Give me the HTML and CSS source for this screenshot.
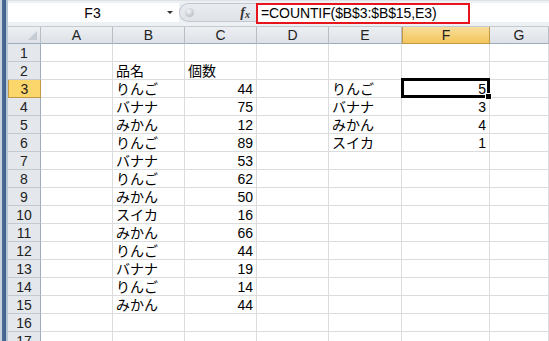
FILE: index.html
```html
<!DOCTYPE html>
<html lang="ja">
<head>
  <meta charset="UTF-8">
  <title>COUNTIF</title>
  <link rel="stylesheet" href="styles.css">
</head>
<body>
  <div class="window">
    <div class="side-bar"></div>
    <div class="main">
      <div class="formula-bar">
        <div class="name-box">
          <span class="name">F3</span>
          <span class="drop"></span>
        </div>
        <div class="splitter">
          <span class="knob"></span>
          <span class="fx">f<sub>x</sub></span>
        </div>
        <div class="formula">
          <span class="formula-text">=COUNTIF($B$3:$B$15,E3)</span>
        </div>
      </div>

      <div class="sheet" id="sheet"></div>
    </div>
  </div>

  <script>
    var cols = ['A', 'B', 'C', 'D', 'E', 'F', 'G'];
    var data = {
      2: { B: '品名', C: '個数' },
      3: { B: 'りんご', C: 44, E: 'りんご', F: 5 },
      4: { B: 'バナナ', C: 75, E: 'バナナ', F: 3 },
      5: { B: 'みかん', C: 12, E: 'みかん', F: 4 },
      6: { B: 'りんご', C: 89, E: 'スイカ', F: 1 },
      7: { B: 'バナナ', C: 53 },
      8: { B: 'りんご', C: 62 },
      9: { B: 'みかん', C: 50 },
      10: { B: 'スイカ', C: 16 },
      11: { B: 'みかん', C: 66 },
      12: { B: 'りんご', C: 44 },
      13: { B: 'バナナ', C: 19 },
      14: { B: 'りんご', C: 14 },
      15: { B: 'みかん', C: 44 }
    };
    var sheet = document.getElementById('sheet');

    function cell(cls, text) {
      var div = document.createElement('div');
      div.className = cls;
      if (text !== undefined) div.textContent = text;
      sheet.appendChild(div);
      return div;
    }

    // header row
    cell('corner');
    cols.forEach(function(c) {
      cell('col-head' + (c === 'F' ? ' active' : ''), c);
    });

    for (var r = 1; r <= 17; r++) {
      cell('row-head' + (r === 3 ? ' active' : ''), r);
      cols.forEach(function(c) {
        var v = data[r] ? data[r][c] : undefined;
        var cls = 'cell';
        if (typeof v === 'number') cls += ' num';
        if (r === 3 && c === 'F') cls += ' selected';
        var el = cell(cls, v);
        if (r === 3 && c === 'F') {
          var h = document.createElement('span');
          h.className = 'handle';
          el.appendChild(h);
        }
      });
    }
  </script>
</body>
</html>
```

FILE: styles.css
```css
body {
  margin: 0;
  background-color: #fff;
  font-family: "Liberation Sans", "Noto Sans CJK JP", sans-serif;
  overflow: hidden;
}

.window {
  display: flex;
  height: 341px;
}

.side-bar {
  width: 8px;
  flex: none;
  background: linear-gradient(to right, #c9d3df 0, #c9d3df 2px, #4f6f98 2px, #3e5f8b 6px, #b7c6d8 6px);
}

.main {
  flex: 1;
  min-width: 0;
}

/* formula bar */
.formula-bar {
  display: flex;
  height: 27px;
  box-sizing: border-box;
  padding-top: 3px;
  background: linear-gradient(#dfe3e8 0, #dfe3e8 1px, #eef1f4 1px);
  border-bottom: 1px solid #c4cad2;
}

.name-box {
  display: flex;
  align-items: center;
  width: 171px;
  height: 19px;
  background-color: #fff;
  position: relative;
}

.name {
  flex: 1;
  text-align: center;
  font-size: 14px;
  color: #000;
  padding-left: 10px;
}

.drop {
  width: 0;
  height: 0;
  margin-right: 6px;
  border-left: 3px solid transparent;
  border-right: 3px solid transparent;
  border-top: 3px solid #333;
}

.splitter {
  display: flex;
  align-items: center;
  width: 77px;
  height: 19px;
  box-sizing: border-box;
  background: linear-gradient(#e9ecf0, #dfe3e8);
  border: 1px solid #c2c8d0;
  border-right: none;
  border-radius: 10px 0 0 10px;
}

.knob {
  width: 9px;
  height: 9px;
  margin-left: 5px;
  border-radius: 50%;
  background: radial-gradient(circle at 40% 35%, #f4f5f7, #a8afb8);
}

.fx {
  margin-left: auto;
  margin-right: 6px;
  font-family: "Liberation Serif", serif;
  font-style: italic;
  font-weight: bold;
  font-size: 14px;
  color: #333;
}

.fx sub {
  font-size: 10px;
  vertical-align: -1px;
}

.formula {
  flex: 1;
  height: 19px;
  background-color: #fff;
}

.formula-text {
  display: inline-block;
  width: 214px;
  height: 21px;
  box-sizing: border-box;
  border: 2px solid #e8141c;
  padding-left: 3px;
  font-size: 14px;
  line-height: 17px;
  color: #000;
  background-color: #fff;
  letter-spacing: -0.1px;
}

/* grid */
.sheet {
  display: grid;
  grid-template-columns: 33px 72px 72px 72px 72px 73px 88px 1fr;
  grid-template-rows: 17px repeat(17, 18px);
  font-size: 14px;
}

.corner,
.col-head,
.row-head {
  background: linear-gradient(#edeff2, #dde2e8);
  color: #222;
  box-sizing: border-box;
  border-right: 1px solid #b8bec6;
  border-bottom: 1px solid #9eabb9;
}

.corner {
  position: relative;
}

.corner::after {
  content: "";
  position: absolute;
  right: 3px;
  bottom: 3px;
  border-left: 9px solid transparent;
  border-bottom: 9px solid #c6ccd3;
}

.col-head {
  text-align: center;
  line-height: 17px;
}

.row-head {
  text-align: center;
  line-height: 18px;
  background: #e4e8ed;
  border-bottom: 1px solid #c2c9d1;
  border-right: 1px solid #9eabb9;
}

.col-head.active {
  background: linear-gradient(#f8de9a, #f3c65c);
  border: 1px solid #c29a47;
  border-top: none;
}

.row-head.active {
  background: #fbd66a;
  border: 1px solid #c29a47;
  border-top: none;
}

.cell {
  box-sizing: border-box;
  border-right: 1px solid #dadcdd;
  border-bottom: 1px solid #dadcdd;
  padding: 0 3px;
  line-height: 18px;
  white-space: nowrap;
  color: #000;
}

.cell.num {
  text-align: right;
}

.cell.selected {
  position: relative;
  border: 3px solid #000;
  margin: -2px 0 0 -1px;
  line-height: 16px;
  padding-right: 1px;
}

.handle {
  position: absolute;
  right: -5px;
  bottom: -5px;
  width: 5px;
  height: 5px;
  background-color: #000;
  border: 1px solid #fff;
}
```
